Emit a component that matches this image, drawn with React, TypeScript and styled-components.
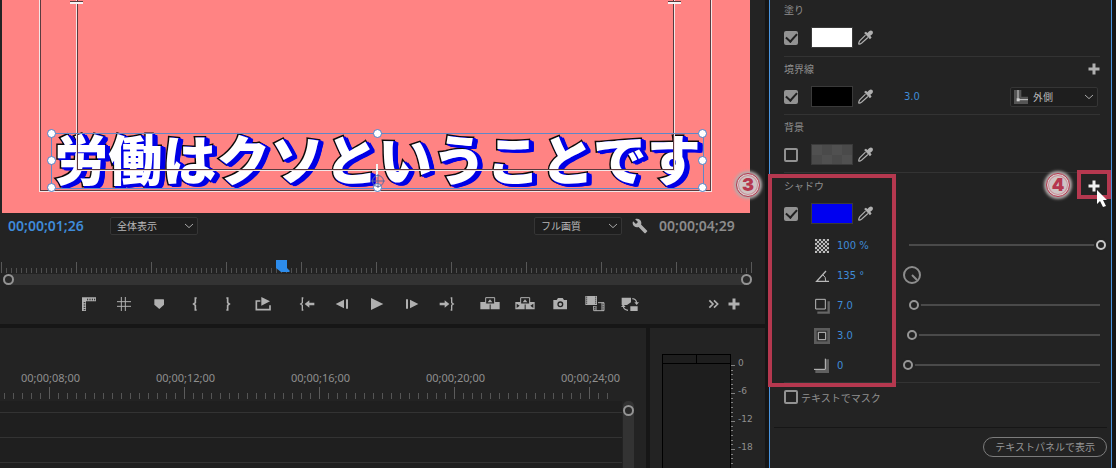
import React from 'react';
import styled, { createGlobalStyle } from 'styled-components';
import { MdBuild } from 'react-icons/md';

const c = {
  app: '#161616',
  panel: '#232323',
  line: '#333333',
  text: '#8f8f8f',
  icon: '#b0b0b0',
  blue: '#3f8bd8',
  red: '#b5384f',
};

const GlobalStyle = createGlobalStyle`
  * { box-sizing: border-box; }
  body {
    margin: 0;
    background: ${c.app};
    color: ${c.text};
    font-family: "Noto Sans", "Noto Sans CJK JP", sans-serif;
    font-size: 10px;
    overflow: hidden;
  }
  button, select, input { font: inherit; color: inherit; margin: 0; }
  svg { display: block; }
`;

const Workspace = styled.div`
  display: grid;
  grid-template-columns: minmax(0, 1fr) 343px;
  gap: 4px;
  padding-right: 4px;
  height: 100vh;
`;

const LeftColumn = styled.div`
  display: flex;
  flex-direction: column;
  gap: 4px;
  min-height: 0;
`;

/* ---------- program monitor ---------- */

const Monitor = styled.section`
  background: ${c.panel};
  height: 324px;
  flex: none;
`;

const Video = styled.div`
  position: relative;
  height: 213px;
  margin: 0 15px 0 2px;
  background: #ff8383;
  overflow: hidden;
`;

const SafeFrame = styled.div<{ $side: number; $bottom: number }>`
  position: absolute;
  top: -10px;
  left: ${(p) => p.$side}px;
  right: ${(p) => p.$side + 1}px;
  bottom: ${(p) => p.$bottom}px;
  border: 1px solid #f4e6e6;
  box-shadow: inset 0 0 0 1px #5a3a3e;
`;

const SafeTick = styled.i<{ $side: 'left' | 'right' | 'bottom' }>`
  position: absolute;
  background: #f4f4f4;
  ${(p) =>
    p.$side === 'bottom'
      ? 'left: 50%; bottom: -7px; width: 2px; height: 13px;'
      : `${p.$side}: -7px; top: 11px; width: 13px; height: 2px; box-shadow: 0 -1px 0 #5a3a3e;`}
`;

const ring = (r: number, x: number, y: number, color: string) =>
  [[0, r], [0, -r], [r, 0], [-r, 0], [r, r], [-r, r], [r, -r], [-r, -r]]
    .map(([a, b]) => `${x + a}px ${y + b}px 0 ${color}`)
    .join(', ');

const Caption = styled.div`
  position: absolute;
  left: 49px;
  right: 46px;
  top: 130px;
  height: 56px;
  display: flex;
  align-items: center;
  justify-content: center;
  font: 900 54px/56px "Noto Sans CJK JP", sans-serif;
  white-space: nowrap;
  color: #fff;
  -webkit-text-stroke: 3px #0a0a0a;
  paint-order: stroke fill;
  text-shadow: ${ring(1, 2, 1, '#0000e6')}, ${ring(1, 4, 2, '#0000e6')};
`;

const Bounds = styled.div`
  position: absolute;
  left: 49px;
  right: 46px;
  top: 133px;
  height: 56px;
  border: 1px solid #5f87c8;
`;

const Handle = styled.i<{ $x: string; $y: string }>`
  position: absolute;
  left: ${(p) => p.$x};
  top: ${(p) => p.$y};
  width: 9px;
  height: 9px;
  margin: -5px;
  border: 1px solid #4d7fc6;
  border-radius: 50%;
  background: #fff;
`;

const Anchor = styled.svg`
  position: absolute;
  left: 50%;
  bottom: 0;
  margin-left: -7px;
`;

const MonitorBar = styled.div`
  display: flex;
  align-items: center;
  height: 25px;
  padding: 0 30px 0 8px;
`;

const Timecode = styled.span<{ $active?: boolean }>`
  font: 600 14px/20px "Noto Sans", sans-serif;
  width: 76px;
  white-space: nowrap;
  color: ${(p) => (p.$active ? c.blue : '#8c8c8c')};
`;

const SelectBox = styled.span<{ $push?: string; $tall?: boolean }>`
  display: grid;
  align-items: center;
  width: 88px;
  height: ${(p) => (p.$tall ? 20 : 18)}px;
  margin-left: ${(p) => p.$push || 0};
  > * { grid-area: 1 / 1; }
  > svg { pointer-events: none; margin-left: 4px; }
  > svg:last-child { justify-self: end; margin: 0 4px 0 0; }
`;

const Select = styled.select<{ $indent: number }>`
  appearance: none;
  width: 100%;
  height: 100%;
  padding: 0 16px 0 ${(p) => p.$indent}px;
  border: 1px solid #353535;
  border-radius: 2px;
  background: #1e1e1e;
  color: #b8b8b8;
  outline: 0;
`;

const IconButton = styled.button<{ $w?: number }>`
  display: grid;
  place-items: center;
  width: ${(p) => p.$w || 35}px;
  height: 24px;
  padding: 0;
  border: 0;
  background: none;
  color: ${c.icon};
`;

const Settings = styled(IconButton)`
  margin: 0 11px 0 10px;
  width: 16px;
`;

const Ruler = styled.div`
  position: relative;
  height: 11px;
  margin: 24px 13px 0 1px;
  background:
    repeating-linear-gradient(90deg, #585858 0 1px, transparent 1px 75px),
    repeating-linear-gradient(90deg, #505050 0 1px, transparent 1px 5px) 0 6px no-repeat;
`;

const Playhead = styled.svg`
  position: absolute;
  left: 275px;
  top: -2px;
`;

const ZoomBar = styled.div`
  display: flex;
  justify-content: space-between;
  align-items: center;
  height: 11px;
  margin: 1px 13px 0 3px;
  border-radius: 5px;
  background: #333;
`;

const Knob = styled.i`
  width: 11px;
  height: 11px;
  border: 2px solid #949494;
  border-radius: 50%;
  background: #2a2a2a;
`;

const Transport = styled.div`
  display: flex;
  height: 24px;
  margin-top: 7px;
  padding: 0 21px 0 71px;
`;

const Group = styled.div<{ $gap?: number; $end?: boolean }>`
  display: flex;
  margin-left: ${(p) => (p.$end ? 'auto' : `${p.$gap || 0}px`)};
`;

/* ---------- timeline and meter ---------- */

const BottomRow = styled.div`
  display: grid;
  grid-template-columns: minmax(0, 1fr) 115px;
  gap: 4px;
  flex: 1;
  min-height: 0;
`;

const Panel = styled.section`
  background: ${c.panel};
  overflow: hidden;
  display: flex;
  flex-direction: column;
`;

const TimeLabels = styled.div`
  display: flex;
  margin: 42px 0 1px -17px;
  font-size: 11px;
  line-height: 16px;
  > span { flex: 0 0 135px; text-align: center; }
`;

const TimeTicks = styled.div`
  height: 12px;
  margin-right: 30px;
  background:
    repeating-linear-gradient(90deg, #5c5c5c 0 1px, transparent 1px 135px) 49px 0 no-repeat,
    repeating-linear-gradient(90deg, #555 0 1px, transparent 1px 9px) 4px 6px no-repeat;
`;

const TrackArea = styled.div`
  display: flex;
  flex: 1;
  margin-top: 2px;
`;

const Tracks = styled.div`
  flex: 1;
  background: #1f1f1f;
  > div { height: 25px; border-bottom: 1px solid ${c.line}; }
  > div:first-child { height: 12px; }
`;

const TrackScroll = styled.div`
  width: 11px;
  margin: 0 12px 0 1px;
  padding-top: 4px;
  background: #333;
  border-radius: 5px 5px 0 0;
`;

const MeterBody = styled.div`
  display: flex;
  flex: 1;
  margin: 26px 0 0 12px;
`;

const MeterWell = styled.div`
  width: 69px;
  border: 1px solid #000;
  border-bottom: 0;
  background: #1e1e1e;
`;

const MeterPeaks = styled.div`
  display: flex;
  height: 9px;
  border-bottom: 1px solid #000;
  > i { flex: 1; }
  > i + i { border-left: 1px solid #000; }
`;

const Scale = styled.div`
  padding-top: 11px;
`;

const ScaleStep = styled.div`
  display: flex;
  height: 28px;
  font: 9px/10px "DejaVu Sans", sans-serif;
  > span { margin: -7px 0 0 3px; }
`;

const ScaleTicks = styled.div`
  display: flex;
  flex-direction: column;
  width: 4px;
  > i { flex: 1; width: 2px; border-top: 1px solid #808080; }
  > i:first-child { width: 4px; }
`;

/* ---------- properties panel ---------- */

const Properties = styled.aside`
  border-left: 1px solid #4a95e0;
  border-right: 1px solid #4a95e0;
  background: ${c.panel};
  display: flex;
  flex-direction: column;
`;

const Section = styled.section<{ $first?: boolean }>`
  position: relative;
  margin: 0 11px 0 14px;
  padding: ${(p) => (p.$first ? '3px 0 8px' : '5px 0 7px')};
  border-bottom: 1px solid ${c.line};
`;

const ShadowSection = styled(Section)`
  padding: 6px 0 1px;
`;

const SectionHead = styled.div`
  display: flex;
  align-items: center;
  justify-content: space-between;
  height: 14px;
  margin-bottom: 10px;
  > h2 { margin: 0; font-size: 10px; font-weight: 400; line-height: 14px; }
`;

const AddButton = styled(IconButton)<{ $hot?: boolean }>`
  width: 12px;
  height: 14px;
  color: ${(p) => (p.$hot ? '#f0f0f0' : c.icon)};
`;

const PaintRow = styled.div`
  display: flex;
  align-items: center;
  height: 21px;
`;

const Check = styled.input`
  appearance: none;
  display: grid;
  place-items: center;
  flex: none;
  width: 14px;
  height: 14px;
  border: 2px solid #929292;
  border-radius: 2px;
  &:checked { background: #929292; }
  &:checked::before {
    content: '';
    width: 5px;
    height: 9px;
    margin-top: -3px;
    border: solid #202020;
    border-width: 0 2px 2px 0;
    transform: rotate(42deg);
  }
`;

const Swatch = styled.button<{ $fill: string }>`
  width: 42px;
  height: 21px;
  margin: 0 5px 0 13px;
  padding: 0;
  border: 1px solid #3a3a3a;
  background: ${(p) => p.$fill};
`;

const Value = styled.span`
  font: 10px/14px "DejaVu Sans", sans-serif;
  color: ${c.blue};
  width: 66px;
`;

const BorderTail = styled.div`
  display: flex;
  flex: 1;
  align-items: center;
  justify-content: space-between;
  padding: 0 2px 0 31px;
`;

const Params = styled.div`
  margin: 7px -6px 0 30px;
`;

const ParamRow = styled.div`
  display: flex;
  align-items: center;
  height: 30px;
  > svg:first-child { width: 16px; margin-right: 7px; }
  > :last-child { margin-bottom: 2px; }
`;

const Range = styled.input`
  appearance: none;
  flex: 1;
  min-width: 0;
  height: 12px;
  background: linear-gradient(#4a4a4a, #4a4a4a) center / calc(100% - 12px) 2px no-repeat;
  outline: 0;
  &::-webkit-slider-thumb {
    appearance: none;
    box-sizing: border-box;
    width: 10px;
    height: 10px;
    border: 2px solid #969696;
    border-radius: 50%;
    background: ${c.panel};
    box-shadow: 0 0 0 2px ${c.panel};
  }
`;

const FullRange = styled(Range)`
  &::-webkit-slider-thumb { border-color: #c8c8c8; }
`;

const MaskLabel = styled.label`
  display: flex;
  align-items: center;
  gap: 3px;
  margin: 7px 14px 0;
  height: 14px;
`;

const Footer = styled.footer`
  display: flex;
  justify-content: flex-end;
  margin: 23px 4px 0;
  padding-top: 9px;
  border-top: 1px solid #161616;
`;

const PillButton = styled.button`
  height: 20px;
  padding: 0 11px;
  border: 1px solid #7c7c7c;
  border-radius: 10px;
  background: none;
  color: #979797;
  line-height: 16px;
`;

/* ---------- annotations ---------- */

const Highlight = styled.div`
  position: absolute;
  left: -16px;
  top: 1px;
  bottom: -5px;
  width: 128px;
  border: 4px solid ${c.red};
  pointer-events: none;
`;

const PlusHighlight = styled.div`
  position: absolute;
  right: -11px;
  top: -3px;
  width: 34px;
  height: 29px;
  border: 4px solid ${c.red};
  pointer-events: none;
`;

const StepBadge = styled.b<{ $x: number }>`
  position: absolute;
  left: ${(p) => p.$x}px;
  top: 0;
  display: grid;
  place-items: center;
  width: 24px;
  height: 24px;
  border: 1px solid ${c.red};
  border-radius: 50%;
  background: #cfc4c4;
  box-shadow: 0 0 3px 2px #b4acac, inset 0 0 0 1px #d8d0d0, inset 0 0 0 2px #c98e98;
  color: ${c.red};
  font: 900 18px/22px Inter, sans-serif;
`;

const Cursor = styled.svg`
  position: absolute;
  right: -8px;
  top: 17px;
`;

/* ---------- icons ---------- */

const Glyph = ({ w = 20, children }: { w?: number; children: React.ReactNode }) => (
  <svg width={w} height={16} viewBox={`0 0 ${w * 3} 48`} fill="currentColor" aria-hidden="true">
    {children}
  </svg>
);

const line = (width: number) => ({ fill: 'none', stroke: 'currentColor', strokeWidth: width });

const Chevron = () => (
  <svg width="10" height="6" viewBox="0 0 10 6" fill="none" stroke="#a8a8a8">
    <path d="M1 1l4 3.6L9 1" />
  </svg>
);

const Plus = () => (
  <svg width="12" height="12" viewBox="0 0 12 12" fill="currentColor">
    <path d="M4.5 .5h3v4h4v3h-4v4h-3v-4h-4v-3h4z" />
  </svg>
);

const Dropper = () => (
  <svg width="15" height="15" viewBox="0 0 44 44" fill="#b0b0b0">
    <path d="M18 9l5-4 5 4c4-7 10-10 14-6s1 10-6 14l4 5-5 5z" />
    <path d="M22 15L5 32q-3 5-3 9 4 1 9-3l18-16" fill="none" stroke="#b0b0b0" strokeWidth="3.4" />
  </svg>
);

const icons: Record<string, React.ReactNode> = {
  rulers: (
    <Glyph>
      <path d="M9 4h42v12H21v29H9z" />
      <path d="M26 8v5M33 8v5M40 8v5M47 8v5M14 20h5M14 27h5M14 34h5M14 41h5" stroke={c.panel} strokeWidth="3" />
    </Glyph>
  ),
  guides: <Glyph><path d="M22 3v42M34 3v42M9 17h42M9 31h42" {...line(3)} /></Glyph>,
  marker: <Glyph><path d="M17 10h27l1 1v15L31 39 16 26V11z" /></Glyph>,
  markIn: <Glyph><path d="M35 6h-4v14l-5 4 5 4v14h4" {...line(5)} /></Glyph>,
  markOut: <Glyph><path d="M22 6h4v14l5 4-5 4v14h-4" {...line(5)} /></Glyph>,
  export: (
    <Glyph>
      <path d="M22 15H10v26h41V28" {...line(5)} />
      <path d="M25 3l26 13-26 13z" />
    </Glyph>
  ),
  goIn: (
    <Glyph>
      <path d="M19 6h-3v14l-5 4 5 4v14h3" {...line(4)} />
      <path d="M23 24l14-11v7h15v8H37v7z" />
    </Glyph>
  ),
  goOut: (
    <Glyph>
      <path d="M41 6h3v14l5 4-5 4v14h-3" {...line(4)} />
      <path d="M37 24L23 13v7H8v8h15v7z" />
    </Glyph>
  ),
  stepBack: <Glyph><path d="M11 24l25-13v26zM42 10h6v28h-6z" /></Glyph>,
  play: <Glyph><path d="M12 6l37 18-37 18z" /></Glyph>,
  stepForward: <Glyph><path d="M49 24L24 11v26zM12 10h6v28h-6z" /></Glyph>,
  lift: (
    <Glyph>
      <path d="M1 18h28v22H1zM32 18h27v22H32z" />
      <path d="M17 5h27v19H17z" fill={c.panel} stroke="currentColor" strokeWidth="3" />
      <path d="M30 10l7 9H23z" />
    </Glyph>
  ),
  extract: (
    <Glyph>
      <path d="M1 18h28v22H1zM32 18h27v22H32z" />
      <path d="M17 5h27v19H17z" fill={c.panel} stroke="currentColor" strokeWidth="3" />
      <path d="M30 10l7 9H23z" />
      <path d="M5 23l9 6.500-9 6.500zM55 23l-9 6.500 9 6.500z" fill={c.panel} />
    </Glyph>
  ),
  camera: (
    <Glyph>
      <path d="M10 12h10l4-6h14l4 6h9v28H10z" />
      <circle cx="31" cy="25" r="7" fill="currentColor" stroke={c.panel} strokeWidth="4" />
    </Glyph>
  ),
  compare: (
    <Glyph>
      <path d="M1 0h35v27H1z" />
      <path d="M5 2v24M32 2v24" stroke={c.panel} strokeWidth="3" strokeDasharray="3 3" />
      <path d="M26 30v14h31V20H39" {...line(3)} />
      <path d="M33 30v14M51 20v24" {...line(3)} />
      <path d="M29.500 30v14M54.500 20v24" stroke="currentColor" strokeWidth="3" strokeDasharray="3 4" />
    </Glyph>
  ),
  proxy: (
    <Glyph>
      <path d="M5 5h28v14l-12 8H5zM31 31h22v14H31z" />
      <path d="M37 8q12 1 13 13M24 43Q10 41 10 30" {...line(3.500)} />
      <path d="M43 19h14l-7 8zM3 33h14l-7-8z" />
    </Glyph>
  ),
  more: <Glyph w={12}><path d="M4 13l11 11L4 35M18 13l11 11-11 11" {...line(5)} /></Glyph>,
};

const OpacityIcon = () => (
  <svg width="14" height="14" viewBox="0 0 14 14">
    <rect width="14" height="14" fill="#3a3a3a" />
    {Array.from({ length: 49 }, (_, i) => i)
      .filter((i) => i % 2 === 0)
      .map((i) => (
        <rect key={i} x={(i % 7) * 2} y={Math.floor(i / 7) * 2} width="2" height="2" fill="#bdbdbd" />
      ))}
  </svg>
);

const AngleIcon = () => (
  <svg width="16" height="16" viewBox="0 0 48 48" fill="none" stroke="#b8b8b8">
    <path d="M45 40H8L36 9" strokeWidth="4" />
    <path d="M27 21q9 5 8 18" strokeWidth="3" />
  </svg>
);

const DistanceIcon = () => (
  <svg width="16" height="16" viewBox="0 0 48 48" fill="none">
    <path d="M44 10v34H10" stroke="#666" strokeWidth="7" />
    <path d="M5 4h29v29H5z" stroke="#b8b8b8" strokeWidth="3" fill={c.panel} />
  </svg>
);

const SizeIcon = () => (
  <svg width="16" height="16" viewBox="0 0 48 48">
    <path d="M0 0h48v48H0z" fill="#5c5c5c" />
    <path d="M8 8h32v32H8z" fill="#303030" />
    <path d="M13 13h22v22H13z" fill={c.panel} stroke="#c0c0c0" strokeWidth="3" />
  </svg>
);

const BlurIcon = () => (
  <svg width="16" height="16" viewBox="0 0 48 48" fill="none">
    <path d="M40 4v36H4" stroke="#606060" strokeWidth="10" />
    <path d="M34 2v32H0" stroke="#c8c8c8" strokeWidth="3" />
  </svg>
);

const OutsideIcon = () => (
  <svg width="14" height="14" viewBox="0 0 42 42">
    <path d="M0 0h22v20h20v22H0z" fill="#555" />
    <path d="M12 0v29h30" fill="none" stroke="#d0d0d0" strokeWidth="3" />
    <path d="M8 25h9v9H8z" fill="#d0d0d0" />
  </svg>
);

const Dial = () => (
  <svg width="18" height="18" viewBox="0 0 18 18" fill="none" stroke="#8c8c8c" strokeWidth="2">
    <circle cx="9" cy="9" r="8" />
    <path d="M9 9l5 5" />
  </svg>
);

/* ---------- composition ---------- */

const handles: [string, string][] = [
  ['0%', '0%'], ['50%', '0%'], ['100%', '0%'],
  ['0%', '50%'], ['100%', '50%'],
  ['0%', '100%'], ['50%', '100%'], ['100%', '100%'],
];

const Tools = ({ names, gap, w }: { names: string[]; gap?: number; w?: number }) => (
  <Group $gap={gap}>
    {names.map((n) => (
      <IconButton key={n} $w={w} aria-label={n}>{icons[n]}</IconButton>
    ))}
  </Group>
);

const Paint = ({ name, fill, checked, children }: {
  name: string; fill: string; checked?: boolean; children?: React.ReactNode;
}) => (
  <PaintRow>
    <Check type="checkbox" defaultChecked={checked} aria-label={name} />
    <Swatch $fill={fill} aria-label={`${name} color`} />
    <IconButton $w={15} aria-label={`${name} eyedropper`}><Dropper /></IconButton>
    {children}
  </PaintRow>
);

export default function App() {
  return (
    <>
      <GlobalStyle />
      <Workspace>
        <LeftColumn>
          <Monitor>
            <Video>
              <Caption>労働はクソということです</Caption>
              <SafeFrame $side={37} $bottom={21} />
              <SafeFrame $side={74} $bottom={42}>
                <SafeTick $side="left" />
                <SafeTick $side="right" />
                <SafeTick $side="bottom" />
              </SafeFrame>
              <Bounds>
                {handles.map(([x, y]) => <Handle key={x + y} $x={x} $y={y} />)}
                <Anchor width="14" height="14" viewBox="0 0 14 14" fill="none" stroke="#5f6aa0">
                  <circle cx="7" cy="7" r="5.500" />
                  <path d="M7 0v14M0 7h14" />
                </Anchor>
              </Bounds>
            </Video>
            <MonitorBar>
              <Timecode $active>00;00;01;26</Timecode>
              <SelectBox $push="26px">
                <Select $indent={6} aria-label="Zoom level"><option>全体表示</option></Select>
                <Chevron />
              </SelectBox>
              <SelectBox $push="auto">
                <Select $indent={6} aria-label="Playback resolution"><option>フル画質</option></Select>
                <Chevron />
              </SelectBox>
              <Settings aria-label="Settings"><MdBuild size={16} /></Settings>
              <Timecode>00;00;04;29</Timecode>
            </MonitorBar>
            <Ruler>
              <Playhead width="15" height="13" viewBox="0 0 15 13" fill="#2d8ceb">
                <path d="M0 0h11v8l3 3-1 1H8L5 12 0 8z" />
              </Playhead>
            </Ruler>
            <ZoomBar><Knob /><Knob /></ZoomBar>
            <Transport>
              <Tools names={['rulers', 'guides', 'marker']} />
              <Tools names={['markIn', 'markOut', 'export']} gap={2} w={34} />
              <Tools names={['goIn', 'stepBack', 'play', 'stepForward', 'goOut']} gap={9} />
              <Tools names={['lift', 'extract', 'camera', 'compare', 'proxy']} gap={8} />
              <Group $end>
                <IconButton $w={20} aria-label="more">{icons.more}</IconButton>
                <IconButton $w={20} aria-label="add"><Plus /></IconButton>
              </Group>
            </Transport>
          </Monitor>
          <BottomRow>
            <Panel>
              <TimeLabels>
                {['08', '12', '16', '20', '24'].map((s) => <span key={s}>00;00;{s};00</span>)}
              </TimeLabels>
              <TimeTicks />
              <TrackArea>
                <Tracks><div /><div /><div /></Tracks>
                <TrackScroll><Knob as="div" /></TrackScroll>
              </TrackArea>
            </Panel>
            <Panel>
              <MeterBody>
                <MeterWell><MeterPeaks><i /><i /></MeterPeaks></MeterWell>
                <Scale>
                  {['0', '-6', '-12', '-18'].map((v) => (
                    <ScaleStep key={v}>
                      <ScaleTicks><i /><i /><i /><i /><i /><i /></ScaleTicks>
                      <span>{v}</span>
                    </ScaleStep>
                  ))}
                </Scale>
              </MeterBody>
            </Panel>
          </BottomRow>
        </LeftColumn>

        <Properties>
          <Section $first>
            <SectionHead><h2>塗り</h2></SectionHead>
            <Paint name="塗り" fill="#fff" checked />
          </Section>
          <Section>
            <SectionHead>
              <h2>境界線</h2>
              <AddButton aria-label="Add stroke"><Plus /></AddButton>
            </SectionHead>
            <Paint name="境界線" fill="#000" checked>
              <BorderTail>
                <Value>3.0</Value>
                <SelectBox $tall>
                  <Select $indent={22} aria-label="Stroke position"><option>外側</option></Select>
                  <OutsideIcon />
                  <Chevron />
                </SelectBox>
              </BorderTail>
            </Paint>
          </Section>
          <Section>
            <SectionHead><h2>背景</h2></SectionHead>
            <Paint name="背景" fill="repeating-conic-gradient(#4a4a4a 0 25%, #505050 0 50%) 0 0 / 20px 20px" />
          </Section>
          <ShadowSection>
            <SectionHead>
              <h2>シャドウ</h2>
              <AddButton $hot aria-label="Add shadow"><Plus /></AddButton>
            </SectionHead>
            <Paint name="シャドウ" fill="#0000f0" checked />
            <Params>
              <ParamRow>
                <OpacityIcon /><Value>100 %</Value>
                <FullRange type="range" aria-label="Opacity" defaultValue={100} />
              </ParamRow>
              <ParamRow><AngleIcon /><Value>135 °</Value><Dial /></ParamRow>
              <ParamRow>
                <DistanceIcon /><Value>7.0</Value>
                <Range type="range" aria-label="Distance" defaultValue={3} />
              </ParamRow>
              <ParamRow>
                <SizeIcon /><Value>3.0</Value>
                <Range type="range" aria-label="Size" defaultValue={2} />
              </ParamRow>
              <ParamRow>
                <BlurIcon /><Value>0</Value>
                <Range type="range" aria-label="Blur" defaultValue={0} />
              </ParamRow>
            </Params>
            <Highlight />
            <PlusHighlight />
            <StepBadge $x={-48}>3</StepBadge>
            <StepBadge $x={262}>4</StepBadge>
            <Cursor width="12" height="18" viewBox="0 0 12 18" fill="#fff">
              <path d="M1 0v14l3-3 3 6 3-1-3-6h4z" />
            </Cursor>
          </ShadowSection>
          <MaskLabel><Check type="checkbox" />テキストでマスク</MaskLabel>
          <Footer><PillButton>テキストパネルで表示</PillButton></Footer>
        </Properties>
      </Workspace>
    </>
  );
}
